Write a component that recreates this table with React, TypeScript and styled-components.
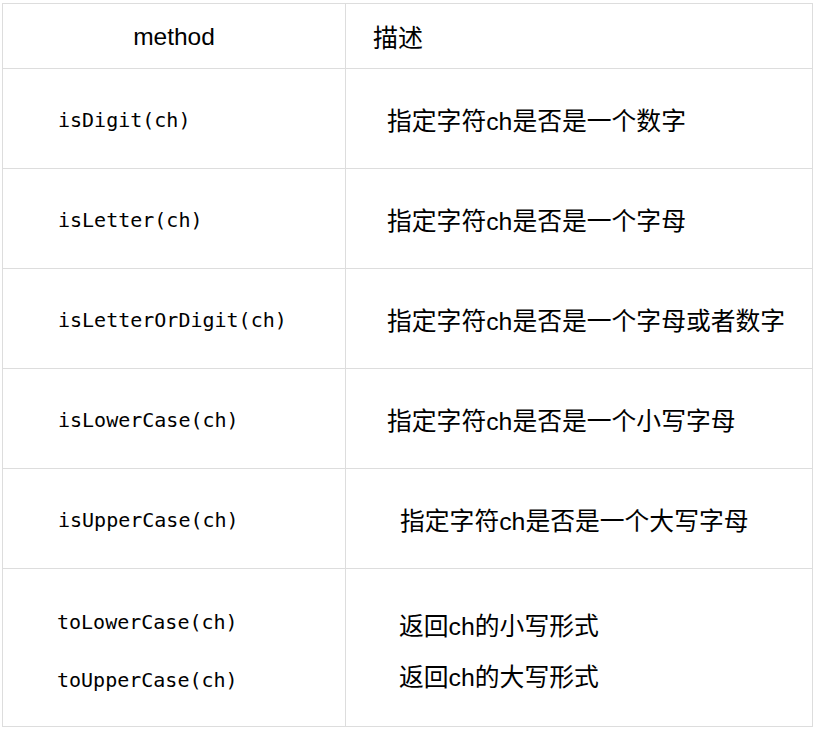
import styled, { createGlobalStyle } from "styled-components";

const Global = createGlobalStyle`
  html, body {
    margin: 0;
    padding: 0;
    background: #ffffff;
  }
  body {
    padding: 3px 0 0 2px;
  }
`;

const Table = styled.table`
  width: 811px;
  border-collapse: collapse;
  table-layout: fixed;
  color: #000;
  font-family: "Liberation Sans", "Noto Sans CJK SC", sans-serif;

  & td, & th {
    border: 1px solid #dddddd;
    padding: 0;
    font-weight: normal;
  }
`;

const HeadRow = styled.tr`
  height: 65px;
`;

const Row = styled.tr<{ $tall?: boolean }>`
  height: ${(p) => (p.$tall ? "158px" : "100px")};
`;

const MethodHead = styled.th`
  text-align: center;
  font-size: 24.5px;
  padding-top: 2px !important;
`;

const DescHead = styled.th`
  text-align: left;
  font-size: 25px;
  padding-left: 27px !important;
  font-family: "Noto Sans CJK SC", sans-serif;
`;

const MethodCell = styled.td<{ $indent?: number }>`
  padding-left: ${(p) => p.$indent ?? 55}px !important;
  padding-top: 2px !important;
  font-family: "DejaVu Sans Mono", "Liberation Mono", monospace;
  font-size: 20px;
`;

const DescCell = styled.td<{ $indent?: number }>`
  padding-left: ${(p) => p.$indent ?? 41}px !important;
  font-size: 24.8px;
`;

const Lines = styled.div<{ $gap: number }>`
  display: flex;
  flex-direction: column;
  gap: ${(p) => p.$gap}px;
  padding-top: 4px;
`;

const rows = [
  { m: "isDigit(ch)", d: "指定字符ch是否是一个数字", i: 41 },
  { m: "isLetter(ch)", d: "指定字符ch是否是一个字母", i: 41 },
  { m: "isLetterOrDigit(ch)", d: "指定字符ch是否是一个字母或者数字", i: 41 },
  { m: "isLowerCase(ch)", d: "指定字符ch是否是一个小写字母", i: 41 },
  { m: "isUpperCase(ch)", d: "指定字符ch是否是一个大写字母", i: 54 },
];

export default function App() {
  return (
    <>
      <Global />
      <Table>
        <colgroup>
          <col style={{ width: 343 }} />
          <col />
        </colgroup>
        <thead>
          <HeadRow>
            <MethodHead>method</MethodHead>
            <DescHead>描述</DescHead>
          </HeadRow>
        </thead>
        <tbody>
          {rows.map((r) => (
            <Row key={r.m}>
              <MethodCell>{r.m}</MethodCell>
              <DescCell $indent={r.i}>{r.d}</DescCell>
            </Row>
          ))}
          <Row $tall>
            <MethodCell $indent={54}>
              <Lines $gap={34}>
                <span>toLowerCase(ch)</span>
                <span>toUpperCase(ch)</span>
              </Lines>
            </MethodCell>
            <DescCell $indent={53}>
              <Lines $gap={15}>
                <span>返回ch的小写形式</span>
                <span>返回ch的大写形式</span>
              </Lines>
            </DescCell>
          </Row>
        </tbody>
      </Table>
    </>
  );
}
